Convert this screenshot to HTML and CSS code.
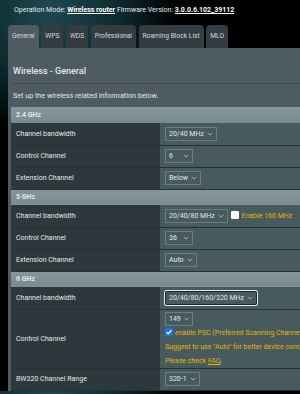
FILE: index.html
```html
<!doctype html>
<html>
<head>
<title>Wireless - General</title>
<link rel="stylesheet" href="styles.css">
</head>
<body>
<div class="page">
	<div class="info">
		Operation Mode: <a href="#">Wireless router</a> Firmware Version: <a href="#">3.0.0.6.102_39112</a>
	</div>
	<ul class="tabs">
		<li class="active">General</li>
		<li>WPS</li>
		<li>WDS</li>
		<li>Professional</li>
		<li>Roaming Block List</li>
		<li>MLO</li>
	</ul>
	<div class="panel">
		<h1>Wireless - General</h1>
		<p class="desc">Set up the wireless related information below.</p>
		<table class="form">
			<tr class="band"><th colspan="2">2.4 GHz</th></tr>
			<tr>
				<td class="label">Channel bandwidth</td>
				<td class="value"><span class="select">20/40 MHz<svg viewBox="0 0 8 5"><path d="M1 1l3 3 3-3"/></svg></span></td>
			</tr>
			<tr>
				<td class="label">Control Channel</td>
				<td class="value"><span class="select short">6<svg viewBox="0 0 8 5"><path d="M1 1l3 3 3-3"/></svg></span></td>
			</tr>
			<tr>
				<td class="label">Extension Channel</td>
				<td class="value"><span class="select short">Below<svg viewBox="0 0 8 5"><path d="M1 1l3 3 3-3"/></svg></span></td>
			</tr>
			<tr class="band"><th colspan="2">5 GHz</th></tr>
			<tr>
				<td class="label">Channel bandwidth</td>
				<td class="value">
					<span class="select">20/40/80 MHz<svg viewBox="0 0 8 5"><path d="M1 1l3 3 3-3"/></svg></span>
					<span class="check"></span><span class="note">Enable 160 MHz</span>
				</td>
			</tr>
			<tr>
				<td class="label">Control Channel</td>
				<td class="value"><span class="select short">36<svg viewBox="0 0 8 5"><path d="M1 1l3 3 3-3"/></svg></span></td>
			</tr>
			<tr>
				<td class="label">Extension Channel</td>
				<td class="value"><span class="select short">Auto<svg viewBox="0 0 8 5"><path d="M1 1l3 3 3-3"/></svg></span></td>
			</tr>
			<tr class="band"><th colspan="2">6 GHz</th></tr>
			<tr>
				<td class="label">Channel bandwidth</td>
				<td class="value"><span class="select focus">20/40/80/160/320 MHz<svg viewBox="0 0 8 5"><path d="M1 1l3 3 3-3"/></svg></span></td>
			</tr>
			<tr class="tall">
				<td class="label">Control Channel</td>
				<td class="value">
					<span class="select short">149<svg viewBox="0 0 8 5"><path d="M1 1l3 3 3-3"/></svg></span>
					<div class="line"><span class="check on"><svg viewBox="0 0 10 10"><path d="M2 5.2l2 2 4-4.4"/></svg></span><span class="note">enable PSC (Preferred Scanning Channel)</span></div>
					<div class="line note">Suggest to use "Auto" for better device compatibility.</div>
					<div class="line note">Please check <a href="#">FAQ</a>.</div>
				</td>
			</tr>
			<tr>
				<td class="label">BW320 Channel Range</td>
				<td class="value"><span class="select short">320-1<svg viewBox="0 0 8 5"><path d="M1 1l3 3 3-3"/></svg></span></td>
			</tr>
		</table>
	</div>
</div>
</body>
</html>
```

FILE: styles.css
```css
* {
	box-sizing: border-box;
	margin: 0;
	padding: 0;
}

body {
	background: radial-gradient(circle at 50px 10px, #1d4a50 0, #0d2a30 70px, #000 125px);
	color: #e3e8e9;
	font-family: Roboto, "Liberation Sans", sans-serif;
	overflow: hidden;
}

.page {
	padding: 3px 0 0 8px;
	width: 460px;
}

.info {
	font-size: 7px;
	height: 14px;
	line-height: 14px;
	padding-left: 6px;
}

.info a {
	color: #fff;
	font-weight: bold;
	text-decoration: underline;
}

.tabs {
	display: flex;
	gap: 2.5px;
	list-style: none;
	margin-top: 8px;
}

.tabs li {
	background: #323c41;
	border-radius: 4px 4px 0 0;
	color: #d4dadc;
	font-size: 6.7px;
	height: 23px;
	line-height: 23px;
	padding: 0 4px;
}

.tabs li.active {
	background: #4e5b60;
}

.panel {
	background: #4e5b60;
	padding: 0 0 0 3px;
}

h1 {
	border-bottom: 1px solid #3e4a4e;
	font-size: 9px;
	font-weight: 500;
	height: 36px;
	line-height: 14px;
	padding: 16px 0 0 2px;
}

.desc {
	font-size: 7.2px;
	height: 23px;
	line-height: 23px;
	padding-left: 2px;
}

.form {
	border-collapse: collapse;
	font-size: 7px;
	width: 440px;
}

.band th {
	background: linear-gradient(#8696a0, #7b8a8f);
	font-weight: bold;
	height: 16px;
	padding-left: 5px;
	text-align: left;
}

.form td {
	border-bottom: 1px solid #26312e;
	height: 22px;
}

.label {
	background: #2d383d;
	padding-left: 5px;
	width: 149px;
}

.value {
	background: #475a5e;
	padding-left: 5px;
}

.select {
	align-items: center;
	border: 1px solid #6a7d81;
	display: inline-flex;
	gap: 3px;
	height: 14px;
	padding: 0 3px;
	vertical-align: middle;
}

.select.short {
	justify-content: space-between;
	min-width: 28px;
}

.select.focus {
	border: 1px solid #1e2628;
	border-radius: 2px;
	box-shadow: 0 0 0 1px #e6eaeb;
}

.select svg {
	fill: none;
	height: 4px;
	stroke: #c9d1d3;
	stroke-width: 1;
	width: 6px;
}

.check {
	background: #fff;
	border-radius: 1px;
	display: inline-block;
	height: 8px;
	margin: 0 2px;
	vertical-align: -1px;
	width: 8px;
}

.check.on {
	background: #1a73e8;
	margin-left: 0;
}

.check svg {
	display: block;
	fill: none;
	height: 8px;
	stroke: #fff;
	stroke-width: 1.6;
	width: 8px;
}

.note {
	color: #e8b400;
	white-space: nowrap;
}

.note a {
	color: #e8b400;
}

.line {
	line-height: 14px;
	white-space: nowrap;
}

.tall td {
	height: 58px;
}

.tall .value {
	padding: 2px 0 0 5px;
	vertical-align: top;
}

.tall .select {
	display: flex;
	width: 28px;
}
```
